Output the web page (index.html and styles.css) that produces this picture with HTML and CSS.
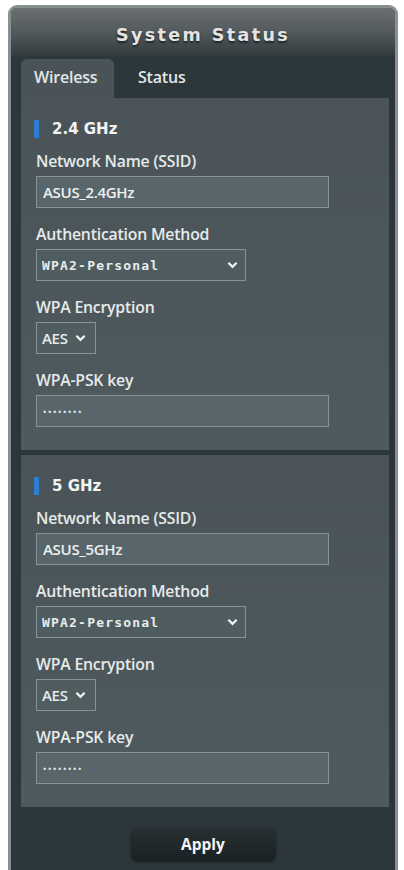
FILE: index.html
```html
<!DOCTYPE html>
<html lang="en">
  <head>
    <meta charset="UTF-8" />
    <meta name="viewport" content="width=device-width, initial-scale=1.0" />
    <title>System Status</title>
    <link rel="stylesheet" href="styles.css">
  </head>
  <body>
    <div class="panel">
      <div class="panel-title">System Status</div>
      <div class="tabs">
        <div class="tab active">Wireless</div>
        <div class="tab">Status</div>
      </div>

      <div class="band">
        <div class="band-title">2.4 GHz</div>
        <div class="field">
          <label for="ssid24">Network Name (SSID)</label>
          <input class="text" type="text" id="ssid24" value="ASUS_2.4GHz" />
        </div>
        <div class="field">
          <label for="auth24">Authentication Method</label>
          <div class="select auth">
            <select id="auth24">
              <option>WPA2-Personal</option>
            </select>
            <svg viewBox="0 0 12 8"><path d="M1.5 1.5 6 6l4.5-4.5" /></svg>
          </div>
        </div>
        <div class="field">
          <label for="enc24">WPA Encryption</label>
          <div class="select enc">
            <select id="enc24">
              <option>AES</option>
            </select>
            <svg viewBox="0 0 12 8"><path d="M1.5 1.5 6 6l4.5-4.5" /></svg>
          </div>
        </div>
        <div class="field">
          <label for="psk24">WPA-PSK key</label>
          <input class="text key" type="password" id="psk24" value="12345678" />
        </div>
      </div>

      <div class="band">
        <div class="band-title">5 GHz</div>
        <div class="field">
          <label for="ssid5">Network Name (SSID)</label>
          <input class="text" type="text" id="ssid5" value="ASUS_5GHz" />
        </div>
        <div class="field">
          <label for="auth5">Authentication Method</label>
          <div class="select auth">
            <select id="auth5">
              <option>WPA2-Personal</option>
            </select>
            <svg viewBox="0 0 12 8"><path d="M1.5 1.5 6 6l4.5-4.5" /></svg>
          </div>
        </div>
        <div class="field">
          <label for="enc5">WPA Encryption</label>
          <div class="select enc">
            <select id="enc5">
              <option>AES</option>
            </select>
            <svg viewBox="0 0 12 8"><path d="M1.5 1.5 6 6l4.5-4.5" /></svg>
          </div>
        </div>
        <div class="field">
          <label for="psk5">WPA-PSK key</label>
          <input class="text key" type="password" id="psk5" value="12345678" />
        </div>
      </div>

      <div class="actions">
        <button type="button">Apply</button>
      </div>
    </div>
  </body>
</html>
```

FILE: styles.css
```css
body {
  margin: 0;
  background: #fff;
  font-family: "Open Sans", "DejaVu Sans", sans-serif;
  overflow: hidden;
}
.panel {
  margin: 5px 6px 0 8px;
  border: 3px solid #8a9092;
  border-bottom: none;
  border-radius: 9px 9px 0 0;
  background: #2c373b;
  padding: 0 6px 20px 10px;
  min-height: 900px;
}
.panel-title {
  margin: 0 -6px 0 -10px;
  height: 48px;
  line-height: 54px;
  text-align: center;
  border-radius: 6px 6px 0 0;
  background: linear-gradient(#6b7071, #50575a 55%, #343b3e);
  color: #e4e4e4;
  font-family: "DejaVu Sans", sans-serif;
  font-weight: bold;
  font-size: 17.5px;
  letter-spacing: 2.4px;
  text-shadow: 0 2px 2px #1e2426;
}
.tabs {
  display: flex;
  height: 42px;
  align-items: flex-end;
}
.tab {
  height: 39px;
  line-height: 37px;
  padding: 0 13px;
  color: #e2e6e6;
  font-size: 16px;
  font-weight: 600;
  letter-spacing: -0.2px;
  border-radius: 6px 6px 0 0;
}
.tab.active {
  width: 67px;
  background: #4a5458;
  margin-right: 11px;
}
.band {
  background: linear-gradient(#4a5458, #4f5a5e);
  padding: 22px 0 23px 15px;
}
.band + .band {
  margin-top: 5px;
}
.band-title {
  height: 18px;
  line-height: 18px;
  padding-left: 17px;
  border-left: 5px solid #2b7fd2;
  margin-left: -2px;
  color: #f2f4f4;
  font-family: "DejaVu Sans", sans-serif;
  font-weight: bold;
  font-size: 15px;
  text-indent: -4px;
}
.field {
  margin-top: 16px;
}
.band-title + .field {
  margin-top: 13px;
}
.field label {
  display: block;
  height: 20px;
  line-height: 20px;
  margin-bottom: 5px;
  color: #e6eaea;
  font-size: 15.8px;
  font-weight: 600;
  letter-spacing: -0.2px;
}
.text {
  display: block;
  box-sizing: border-box;
  width: 293px;
  height: 32px;
  margin: 0;
  padding: 0 6px;
  border: 1px solid #85949a;
  background: #58666b;
  color: #eef0f0;
  font-family: "Open Sans", sans-serif;
  font-size: 15px;
  font-weight: 600;
  letter-spacing: -0.3px;
  outline: none;
}
.text.key {
  font-size: 9px;
  letter-spacing: 1.6px;
  color: #dfe4e4;
}
.select {
  position: relative;
  box-sizing: border-box;
  height: 32px;
}
.select.auth {
  width: 210px;
}
.select.enc {
  width: 60px;
}
.select select {
  appearance: none;
  width: 100%;
  height: 32px;
  margin: 0;
  padding: 0 5px;
  border: 1px solid #85949a;
  border-radius: 0;
  background: #4f5c60;
  color: #e8ecec;
  font-family: "DejaVu Sans Mono", monospace;
  font-size: 13px;
  font-weight: bold;
  letter-spacing: 1.2px;
  outline: none;
}
.select.enc select {
  font-family: "Open Sans", sans-serif;
  letter-spacing: -0.3px;
  font-weight: 600;
  font-size: 15px;
}
.select svg {
  position: absolute;
  top: 12px;
  right: 8px;
  width: 11px;
  height: 8px;
  fill: none;
  stroke: #f2f4f4;
  stroke-width: 2.4;
}
.select.enc svg {
  right: 10px;
}
.actions {
  display: flex;
  justify-content: center;
  padding-top: 20px;
  padding-right: 4px;
}
button {
  width: 145px;
  height: 34px;
  border: none;
  border-radius: 7px;
  background: linear-gradient(#283033, #1b2123);
  box-shadow: 0 1px 2px #151a1b;
  color: #f4f4f4;
  font-family: "Open Sans", sans-serif;
  font-size: 15.5px;
  font-weight: bold;
}
```
